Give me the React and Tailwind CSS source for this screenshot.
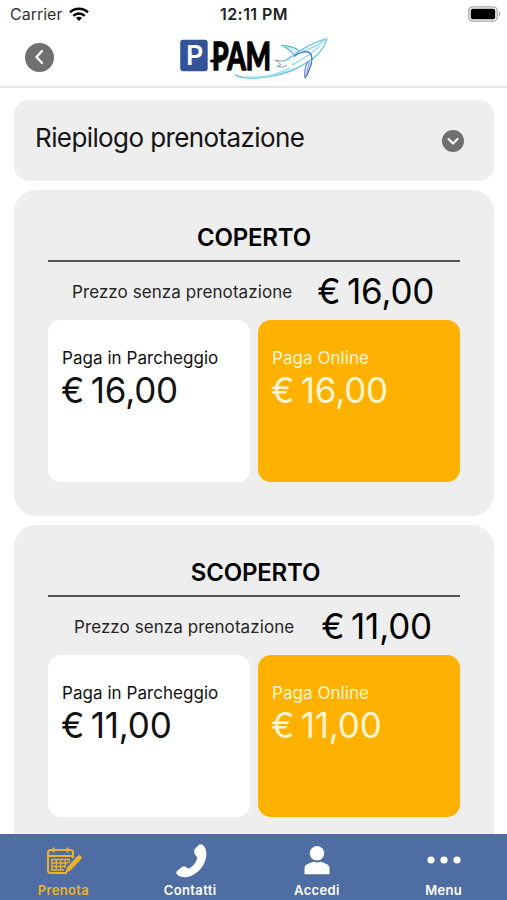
import { useState } from 'react';

const options = [
  { id: 'coperto', name: 'COPERTO', price: '€ 16,00', row: 'pl-6 gap-[25px]', title: '' },
  { id: 'scoperto', name: 'SCOPERTO', price: '€ 11,00', row: 'pl-[26px] gap-[27px]', title: 'pl-[3px]' },
];

const tabs = [
  { id: 'prenota', label: 'Prenota', icon: CalendarIcon },
  { id: 'contatti', label: 'Contatti', icon: PhoneIcon },
  { id: 'accedi', label: 'Accedi', icon: UserIcon },
  { id: 'menu', label: 'Menu', icon: DotsIcon },
];

function WifiIcon() {
  return (
    <svg width="20" height="15" viewBox="0 0 20 15" fill="none" stroke="#000" strokeWidth="2.5">
      <path d="M1 5.4C6 .6 14 .6 19 5.4" />
      <path d="M4.3 8.8c3.3-3 8.1-3 11.4 0" />
      <path d="M7 10.9c1.8-1.5 4.2-1.5 6 0L10 14z" fill="#000" stroke="none" />
    </svg>
  );
}

function BatteryIcon() {
  return (
    <svg width="34" height="16" viewBox="0 0 34 16">
      <rect x=".8" y=".8" width="28.4" height="14.4" rx="4" fill="#fff" stroke="#a5a5a5" strokeWidth="1.3" />
      <rect x="2.8" y="2.8" width="24.4" height="10.4" rx="2" fill="#000" />
      <path d="M30.8 5.6c2 .8 2 4 0 4.8z" fill="#a5a5a5" />
    </svg>
  );
}

function Logo() {
  return (
    <svg width="152" height="52" viewBox="0 -6 152 52" fill="none" className="overflow-visible">
      <rect x="2.200" y="2.700" width="27.500" height="31.500" rx="3" fill="#34549a" />
      <text x="8" y="28" fontFamily="Inter, sans-serif" fontSize="27" fontWeight="600" fill="#fff">P</text>
      <g fontFamily="Lato, sans-serif" fontSize="37" fontWeight="900" fill="#000" stroke="#000" strokeWidth="1.300" strokeLinejoin="round">
        <text x="34" y="32.500" textLength="59" lengthAdjust="spacingAndGlyphs">PAM</text>
      </g>
      <path d="M33.500 24h9" stroke="#000" strokeWidth="3" strokeLinecap="round" />
      {/* swoosh and fuselage */}
      <path d="M57 38c6 2.500 15 4 25 2.800 15-1.500 27-5 36-9.300 9-4.300 16-9 21-13.500" stroke="#6cc6ea" strokeWidth="1.600" />
      <path d="M68 40c16 1.500 31-2 44-9" stroke="#a9dff3" strokeWidth="1.800" />
      <path d="M149 1.700c-9 2.500-18 6.500-26.500 11.600C117 17 112 21 107.500 23.500" stroke="#6bc4e4" strokeWidth="1.400" />
      <path d="M149 1.700c-2 6.500-5.500 12-10 16.300" stroke="#79cdea" strokeWidth="1.400" />
      <path d="M148 3c-8 5-15 9-23 11M142 9c-10 9-17 13-28 19" stroke="#9edcf2" strokeWidth="1.500" />
      {/* wings */}
      <path d="M121 13.500c-5-3.500-11-5-17.500-5.200 5 2 9 5 12.500 9.400" stroke="#58b4dc" strokeWidth="1.300" />
      <path d="M105 9c5 1 10 3 13 6" stroke="#a9dff3" strokeWidth="1" />
      <path d="M116 19.500c5-4.500 12-6 16-3.500 3.500 4 2 10-.5 16-1.200 3.500-2.500 6.500-4.500 9" stroke="#4a74bd" strokeWidth="1.400" />
      <path d="M127 41c-.8-6 0-11.500 3-17" stroke="#6c8fd0" strokeWidth="1.300" />
      <path d="M128.500 38c.5-5 2-9 3-13" stroke="#8ba9de" strokeWidth="1.400" />
      {/* tail */}
      <path d="M107.500 23.500c-4 .8-6 .5-10.500-.5 3 1.500 5 3 5.500 5l-3.500 1.500c4 1 7 .5 10-1" stroke="#8297a6" strokeWidth="1" />
    </svg>
  );
}

function CalendarIcon() {
  return (
    <svg width="36" height="30" viewBox="0 0 36 30" fill="none" stroke="currentColor" className="ml-[3px]">
      <path d="M26 12V6.500Q26 4 23.500 4h-20Q1 4 1 6.500v18Q1 27 3.500 27H20" strokeWidth="2" />
      <path d="M1 10h25M6.500 1.500v5M20.500 1.500v5" strokeWidth="2" />
      <path d="M4 13.500h19M4 17h17M4 20.500h15M4 24h13M5 13v11.500M9.300 13v11.500M13.600 13v11.500M18 13v9M22.200 13v4" strokeWidth="1.300" />
      <path d="m20.500 21.500 10-11q1.500-1.700 3.200-.4 1.500 1.400 0 3l-10.200 11-4.500 2z" fill="currentColor" strokeWidth="1" />
    </svg>
  );
}

function PhoneIcon() {
  return (
    <svg width="32" height="34" viewBox="0 0 32 34" fill="currentColor" className="ml-[3px]">
      <path d="M18.500 5.500 22.500 1c1.300-1.100 3.300-1 4.700.3 2.800 2.700 3.400 6.400 3.100 10.200C29.500 20 24 28 15 32c-5 2-11 1.500-13.800-1.500C0 29.500 0 28 1 27l5-4c1.300-1 2.800-.9 4 0l2.500 1.700c4.500-2.200 8-6.700 8.800-11.200L19 10.500c-1-1.500-1.200-3.500-.5-5z" />
    </svg>
  );
}

function UserIcon() {
  return (
    <svg width="26" height="30" viewBox="0 0 26 30" fill="currentColor">
      <circle cx="13" cy="7.300" r="7.200" />
      <path d="M.500 28.300v-6c0-2 1-3.400 3-4.300 2-1 4-1.700 6-2.200 2 1 5 1 7 0 2 .5 4 1.200 6 2.200 2 .9 3 2.300 3 4.300v6z" />
    </svg>
  );
}

function DotsIcon() {
  return (
    <svg width="34" height="8" viewBox="0 0 34 8" fill="currentColor" className="mb-[2px]">
      <circle cx="4" cy="4" r="3.600" />
      <circle cx="17" cy="4" r="3.600" />
      <circle cx="30" cy="4" r="3.600" />
    </svg>
  );
}

function PayTile({ label, price, className }) {
  return (
    <button className={`h-[162px] flex-1 rounded-[13px] px-[14px] pt-[26px] flex flex-col items-start whitespace-nowrap ${className}`}>
      <span className="text-[17px] leading-6 tracking-[0.05px]">{label}</span>
      <span className="-ml-px text-[35px] leading-[41px] tracking-[-0.2px] [word-spacing:-3px]">{price}</span>
    </button>
  );
}

function ParkingCard({ option }) {
  return (
    <section className="h-[326px] shrink-0 rounded-[22px] bg-[#eee] px-[34px] pt-8">
      <h2 className={`h-[40px] border-b-2 border-[#555] text-center text-[24px] leading-8 font-semibold tracking-[-0.2px] ${option.title}`}>
        {option.name}
      </h2>
      <div className={`h-[58px] flex items-center whitespace-nowrap ${option.row}`}>
        <span className="pt-[3px] text-[17px] text-[#252525] tracking-[0.08px]">Prezzo senza prenotazione</span>
        <span className="text-[35px] tracking-[-0.2px] [word-spacing:-3px]">{option.price}</span>
      </div>
      <div className="flex gap-2">
        <PayTile label="Paga in Parcheggio" price={option.price} className="bg-white text-[#111]" />
        <PayTile label="Paga Online" price={option.price} className="bg-[#ffb100] text-[#fff5d3]" />
      </div>
    </section>
  );
}

export default function App() {
  const [tab, setTab] = useState('prenota');
  const [open, setOpen] = useState(false);

  return (
    <div className="w-[507px] h-[900px] overflow-hidden bg-white text-black flex flex-col font-[Inter,sans-serif]">
      <header className="h-[88px] shrink-0 border-b-2 border-[#e5e5e5]">
        <div className="h-[28px] grid grid-cols-3 items-center pl-[10px] pr-[5px] text-[16px]">
          <div className="flex items-center gap-[7px] text-[#333]">
            <span>Carrier</span>
            <WifiIcon />
          </div>
          <span className="pr-1 text-center font-semibold tracking-[0.45px] text-[#222]">12:11 PM</span>
          <div className="flex justify-end"><BatteryIcon /></div>
        </div>
        <div className="h-[58px] grid grid-cols-[1fr_152px_1fr] items-center">
          <button className="ml-[25px] size-[29px] rounded-full bg-[#707070] flex items-center justify-center">
            <svg width="12" height="16" viewBox="0 0 12 16" fill="none" stroke="#fff" strokeWidth="2.300" strokeLinecap="round" strokeLinejoin="round">
              <path d="M8 2 2.500 8 8 14" />
            </svg>
          </button>
          <Logo />
        </div>
      </header>

      <main className="flex-1 min-h-0 overflow-hidden pl-[14px] pr-[13px] pt-3 flex flex-col gap-[9px]">
        <button
          onClick={() => setOpen(!open)}
          className="h-[81px] shrink-0 rounded-[15px] bg-[#eee] pl-[21px] pr-[30px] flex items-center justify-between"
        >
          <span className="pb-[7px] text-[26px] tracking-[-0.6px] whitespace-nowrap text-[#151515]">Riepilogo prenotazione</span>
          <span className="size-[22px] rounded-full bg-[#707070] flex items-center justify-center">
            <svg width="14" height="10" viewBox="0 0 14 10" fill="none" stroke="#fff" strokeWidth="2.200" strokeLinecap="round" strokeLinejoin="round">
              <path d="m2.500 3 4.500 4.500L11.500 3" />
            </svg>
          </span>
        </button>
        {options.map((o) => (
          <ParkingCard key={o.id} option={o} />
        ))}
      </main>

      <nav className="h-[66px] shrink-0 bg-[#4e6da3] grid grid-cols-4">
        {tabs.map((t) => (
          <button
            key={t.id}
            onClick={() => setTab(t.id)}
            className={`flex flex-col items-center pt-[7px] ${tab === t.id ? 'text-[#eeb02b]' : 'text-white'}`}
          >
            <span className="h-[39px] flex items-center justify-center"><t.icon /></span>
            <span className="text-[13px] leading-5 font-semibold tracking-[0.35px]">{t.label}</span>
          </button>
        ))}
      </nav>
    </div>
  );
}
